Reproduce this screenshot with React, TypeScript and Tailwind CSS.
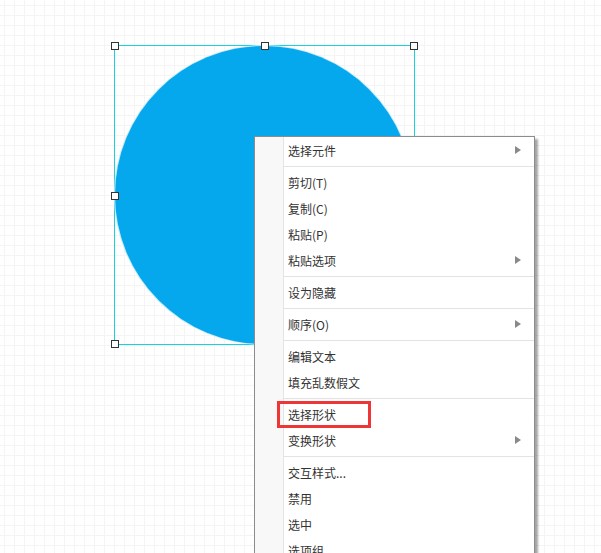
import React from "react";

type Entry = { label?: string; sub?: boolean; sep?: boolean; mark?: boolean };

const entries: Entry[] = [
  { label: "选择元件", sub: true },
  { sep: true },
  { label: "剪切(T)" },
  { label: "复制(C)" },
  { label: "粘贴(P)" },
  { label: "粘贴选项", sub: true },
  { sep: true },
  { label: "设为隐藏" },
  { sep: true },
  { label: "顺序(O)", sub: true },
  { sep: true },
  { label: "编辑文本" },
  { label: "填充乱数假文" },
  { sep: true },
  { label: "选择形状", mark: true },
  { label: "变换形状", sub: true },
  { sep: true },
  { label: "交互样式..." },
  { label: "禁用" },
  { label: "选中" },
  { label: "选项组" },
];

function Handle({ className }: { className: string }) {
  return (
    <div
      className={`absolute h-[8px] w-[8px] border border-[#333] bg-white ${className}`}
    />
  );
}

function SubArrow() {
  return (
    <svg width="6" height="8" viewBox="0 0 6 8" className="mr-[13px]">
      <path d="M0 0 L6 4 L0 8 Z" fill="#8a8a8a" />
    </svg>
  );
}

export default function App() {
  return (
    <div
      className="relative h-[553px] w-[601px] overflow-hidden bg-white bg-[linear-gradient(to_right,#f4f4f4_1px,transparent_1px),linear-gradient(to_bottom,#f4f4f4_1px,transparent_1px)] bg-[size:10px_10px] bg-[position:4px_5px]"
      style={{ fontFamily: '"Noto Sans CJK SC", "Noto Sans", sans-serif' }}
    >
      {/* selected circle shape */}
      <div className="absolute left-[114px] top-[45px] h-[300px] w-[301px] border border-[#19d3dc]">
        <div className="absolute left-[0px] top-[0px] h-[298px] w-[298px] rounded-full bg-[#05a8ec] shadow-[0_0_0_1px_#c9ecfa]" />
        <Handle className="left-[-4px] top-[-4px]" />
        <Handle className="left-[146px] top-[-4px]" />
        <Handle className="right-[-4px] top-[-4px]" />
        <Handle className="left-[-4px] top-[146px]" />
        <Handle className="left-[-4px] bottom-[-4px]" />
      </div>

      {/* context menu */}
      <div className="absolute left-[254px] top-[136px] flex w-[281px] border border-[#8c8c8c] bg-white text-[12px] text-[#333] shadow-[3px_3px_2px_rgba(0,0,0,0.35)]">
        <div className="w-[29px] shrink-0 border-r border-[#e4e4e4] bg-[#f8f8f8]" />
        <div className="flex flex-1 flex-col pb-[4px]">
          {entries.map((e, i) =>
            e.sep ? (
              <div key={i} className="flex h-[6px] items-center">
                <div className="h-px w-full bg-[#e3e3e3]" />
              </div>
            ) : (
              <div
                key={i}
                className="relative flex h-[26px] items-center justify-between pl-[4px]"
              >
                <span className="mt-[2px] leading-none">{e.label}</span>
                {e.sub && <SubArrow />}
                {e.mark && (
                  <div className="absolute left-[-7px] top-[0px] h-[27px] w-[94px] border-[3px] border-[#ee3636]" />
                )}
              </div>
            )
          )}
        </div>
      </div>
    </div>
  );
}
